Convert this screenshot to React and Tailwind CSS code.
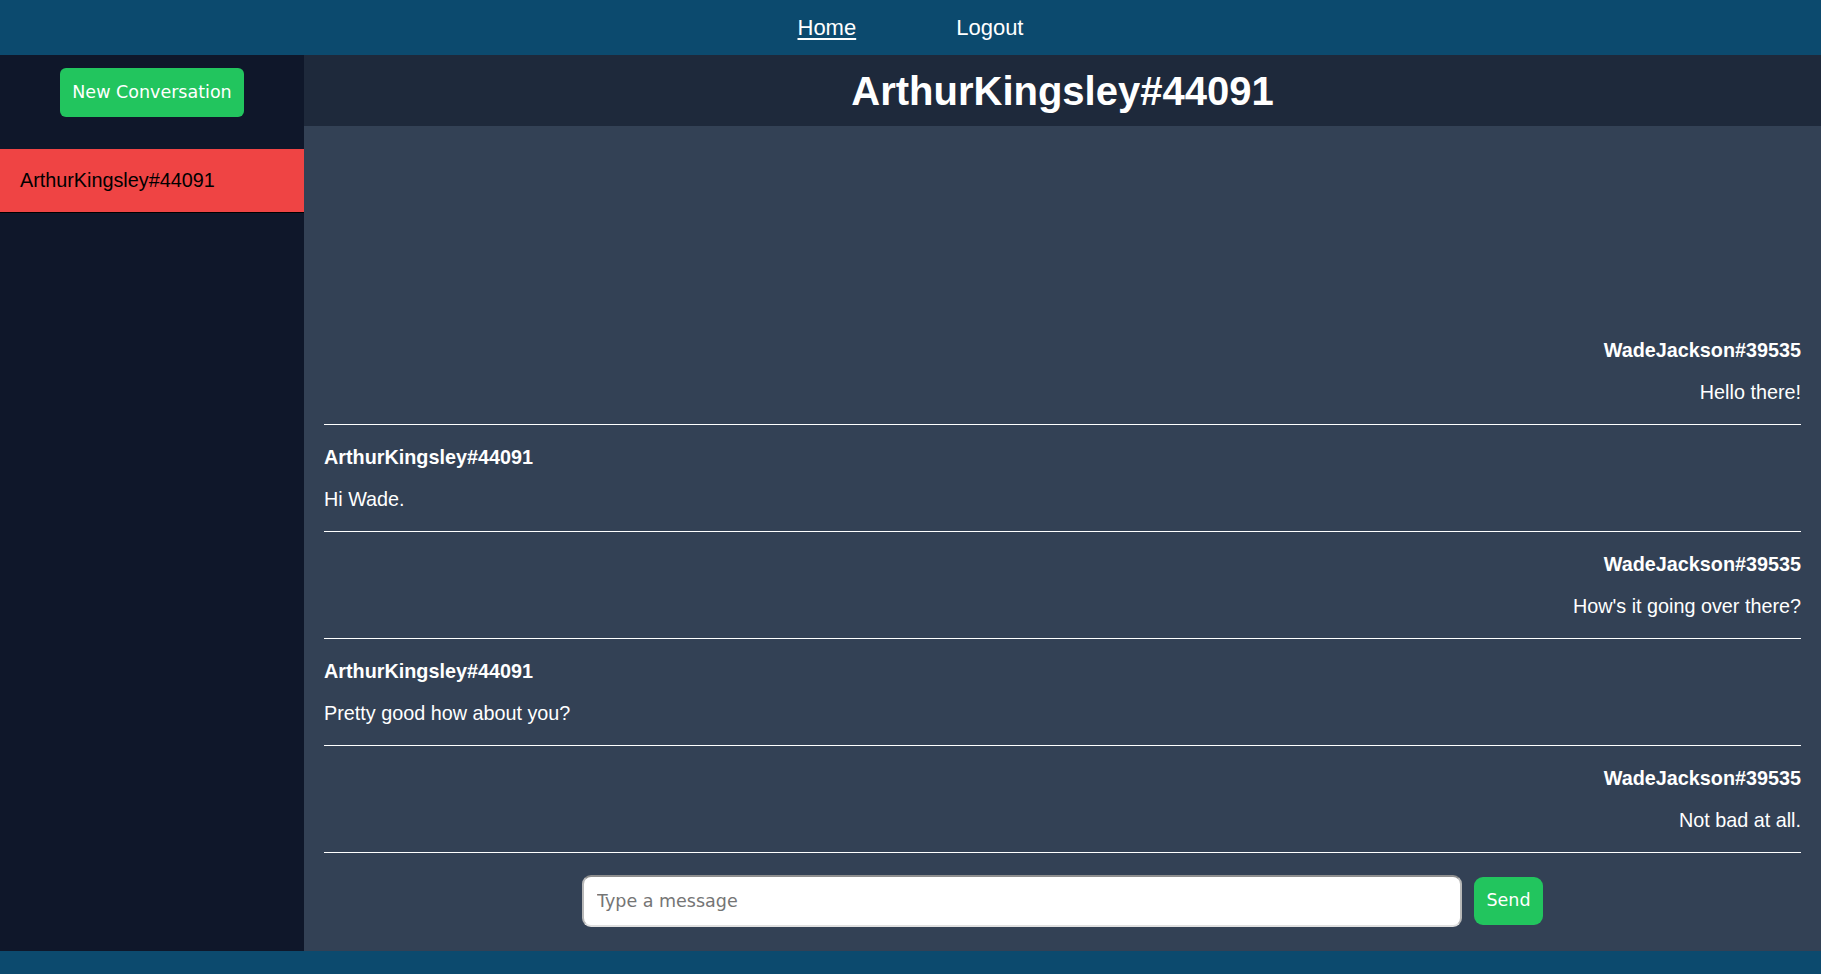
import React from 'react';

const messages = [
  { from: 'WadeJackson#39535', text: 'Hello there!', mine: false },
  { from: 'ArthurKingsley#44091', text: 'Hi Wade.', mine: true },
  { from: 'WadeJackson#39535', text: "How's it going over there?", mine: false },
  { from: 'ArthurKingsley#44091', text: 'Pretty good how about you?', mine: true },
  { from: 'WadeJackson#39535', text: 'Not bad at all.', mine: false },
];

const NavBar = () => {
  return (
    <nav className="h-[55px] shrink-0 bg-[#0c4a6e] flex items-center justify-center gap-[100px] text-[22px] text-white">
      <a href="#" className="underline underline-offset-[3px]">Home</a>
      <a href="#">Logout</a>
    </nav>
  );
};

const SideBar = () => {
  return (
    <aside className="w-[304px] shrink-0 bg-[#0f172a] flex flex-col">
      <div className="pt-[13px] pb-[32px] flex justify-center">
        <button className="h-[49px] w-[184px] rounded-md bg-[#22c55e] text-white text-[17.5px] font-['DejaVu_Sans',sans-serif]">
          New Conversation
        </button>
      </div>
      <ul>
        <li className="h-[64px] bg-[#ef4444] border-b border-black flex items-center pl-[20px] text-[19.8px] text-black">
          ArthurKingsley#44091
        </li>
      </ul>
    </aside>
  );
};

const Message = ({ from, text, mine }) => {
  return (
    <div className={`pt-[17px] pb-[17px] border-b border-white flex flex-col gap-[12px] text-white text-[19.8px] ${mine ? 'items-start' : 'items-end'}`}>
      <p className="leading-[30px] font-bold">{from}</p>
      <p className="leading-[30px]">{text}</p>
    </div>
  );
};

const Chat = () => {
  return (
    <section className="flex-1 flex flex-col bg-[#334155] min-w-0">
      <header className="h-[71px] shrink-0 bg-[#1e293b] flex items-center justify-center">
        <h1 className="text-[40px] font-bold text-white">ArthurKingsley#44091</h1>
      </header>
      <div className="flex-1 flex flex-col justify-end px-[20px] overflow-hidden">
        {messages.map((m, i) => (
          <Message key={i} {...m} />
        ))}
      </div>
      <form className="h-[98px] shrink-0 flex items-center justify-center gap-[12px] pb-[3px]" onSubmit={(e) => e.preventDefault()}>
        <input
          type="text"
          placeholder="Type a message"
          className="w-[880px] h-[52px] rounded-[9px] bg-white border-2 border-[#b8b8b8] border-t-[#8e8e8e] border-b-[#e0e0e0] px-[13px] text-[17.5px] font-['DejaVu_Sans',sans-serif] placeholder:text-[#757575] outline-none"
        />
        <button className="w-[69px] h-[48px] rounded-[9px] bg-[#22c55e] text-white text-[17.5px] font-['DejaVu_Sans',sans-serif]">
          Send
        </button>
      </form>
    </section>
  );
};

export default function App() {
  return (
    <div className="h-screen flex flex-col font-['Liberation_Sans',Arial,sans-serif]">
      <NavBar />
      <main className="flex-1 flex min-h-0">
        <SideBar />
        <Chat />
      </main>
      <footer className="h-[23px] shrink-0 bg-[#0c4a6e]" />
    </div>
  );
}
